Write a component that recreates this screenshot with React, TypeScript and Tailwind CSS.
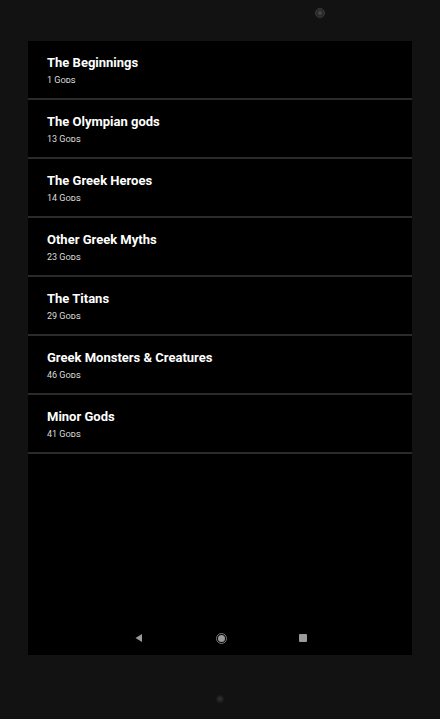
import React from "react";

const items = [
  { title: "The Beginnings", count: 1 },
  { title: "The Olympian gods", count: 13 },
  { title: "The Greek Heroes", count: 14 },
  { title: "Other Greek Myths", count: 23 },
  { title: "The Titans", count: 29 },
  { title: "Greek Monsters & Creatures", count: 46 },
  { title: "Minor Gods", count: 41 },
];

export default function App() {
  return (
    <div
      className="w-[440px] h-[719px] bg-[#121212] flex flex-col items-center overflow-hidden"
      style={{ fontFamily: "Roboto, 'Noto Sans', sans-serif" }}
    >
      <div className="h-[41px] w-full relative">
        <div className="absolute left-[315px] top-[8px] w-[10px] h-[10px] rounded-full bg-[#2a2a2a] border border-[#3a3a3a] flex items-center justify-center">
          <div className="w-[4px] h-[4px] rounded-full bg-[#444]" />
        </div>
      </div>
      <div className="w-[384px] h-[614px] bg-black flex flex-col">
        <div className="flex-1 flex flex-col">
          {items.map((it) => (
            <div key={it.title} className="h-[59px] border-b-2 border-[#2b2b2b] pl-[19px] pt-[14px]">
              <div className="text-[13px] leading-[16px] font-bold text-white">{it.title}</div>
              <div className="text-[9px] leading-[12px] mt-[3px] text-[#dcdcdc] [font-variant:small-caps]">
                {it.count} Gods
              </div>
            </div>
          ))}
        </div>
        <div className="h-[34px] flex items-center justify-center">
          <div className="flex items-center gap-[72px] pl-[1px]">
            <svg width="10" height="10" viewBox="0 0 10 10">
              <path d="M8 1 L8 9 L1.5 5 Z" fill="#9a9a9a" />
            </svg>
            <div className="w-[11px] h-[11px] rounded-full border border-[#777] flex items-center justify-center">
              <div className="w-[7px] h-[7px] rounded-full bg-[#9a9a9a]" />
            </div>
            <div className="w-[8px] h-[8px] bg-[#9a9a9a] rounded-[1px]" />
          </div>
        </div>
      </div>
      <div className="flex-1 w-full flex items-start justify-center pt-[41px]">
        <div className="w-[6px] h-[6px] rounded-full bg-[#2e2e2e] blur-[1px]" />
      </div>
    </div>
  );
}
